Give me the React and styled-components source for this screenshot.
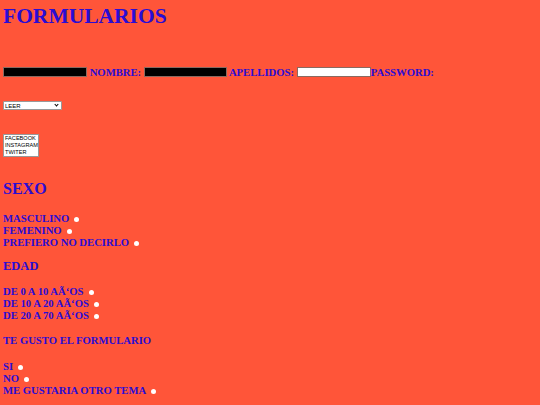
import styled, { createGlobalStyle } from "styled-components";

const Global = createGlobalStyle`
  html, body {
    margin: 0;
    padding: 0;
    background: #ff5539;
  }
  body {
    font-family: "Liberation Serif", "Times New Roman", serif;
    color: #2a0cd4;
    font-weight: bold;
    font-size: 10.67px;
  }
`;

const Page = styled.div`
  padding: 0 3px;
  height: 405px;
  overflow: hidden;
`;

const Title = styled.h1`
  margin: 3px 0 0;
  font-size: 21.5px;
  line-height: 26px;
`;

const Row = styled.div`
  margin-top: 37px;
  line-height: 12px;
  display: flex;
  align-items: center;
  white-space: pre;
`;

const TextBox = styled.input`
  box-sizing: border-box;
  width: ${(p) => p.$w}px;
  height: 10px;
  padding: 0;
  margin: 0;
  border: 1px solid #8a6a60;
  background: ${(p) => (p.$dark ? "#000" : "#fff")};
`;

const SelectWrap = styled.div`
  position: relative;
  width: 59px;
  margin-top: 23px;
  &::after {
    content: "";
    position: absolute;
    right: 4px;
    top: 2px;
    width: 2px;
    height: 2px;
    border-right: 1px solid #000;
    border-bottom: 1px solid #000;
    transform: rotate(45deg);
  }
`;

const Select = styled.select`
  display: block;
  margin: 0;
  width: 59px;
  height: 9px;
  padding: 0 1px;
  font: 6px "Liberation Sans", Arial, sans-serif;
  border: 1px solid #999;
  border-radius: 1px;
  background: #fff;
  color: #000;
  appearance: none;
`;

const ListBox = styled.div`
  margin-top: 24px;
  width: 36px;
  box-sizing: border-box;
  border: 1px solid #999;
  background: #fff;
  padding: 0 1px;
  font: 5.6px/7px "Liberation Sans", Arial, sans-serif;
  color: #000;
  font-weight: normal;
  white-space: nowrap;
  overflow: hidden;
`;

const Heading = styled.h2`
  margin: ${(p) => p.$top}px 0 0;
  font-size: ${(p) => p.$size}px;
  line-height: ${(p) => Math.round(p.$size * 1.15)}px;
`;

const Options = styled.div`
  margin-top: ${(p) => p.$top}px;
  display: flex;
  flex-direction: column;
  line-height: 12px;
`;

const Option = styled.label`
  display: flex;
  align-items: center;
  gap: 5px;
`;

const Dot = styled.input`
  appearance: none;
  margin: 2px 0 0;
  width: 5px;
  height: 5px;
  border-radius: 50%;
  background: #fff;
`;

function Choices({ name, items, top }) {
  return (
    <Options $top={top}>
      {items.map((t) => (
        <Option key={t}>
          {t}
          <Dot type="radio" name={name} />
        </Option>
      ))}
    </Options>
  );
}

export default function App() {
  return (
    <Page>
      <Global />
      <Title>FORMULARIOS</Title>
      <Row>
        <TextBox $dark $w={84} />
        {" NOMBRE: "}
        <TextBox $dark $w={83} />
        {" APELLIDOS: "}
        <TextBox $w={74} />
        {"PASSWORD:"}
      </Row>
      <SelectWrap>
        <Select>
          <option>LEER</option>
        </Select>
      </SelectWrap>
      <ListBox>
        <div>FACEBOOK</div>
        <div>INSTAGRAM</div>
        <div>TWITER</div>
      </ListBox>
      <Heading $top={23} $size={16}>SEXO</Heading>
      <Choices
        top={14}
        name="sexo"
        items={["MASCULINO", "FEMENINO", "PREFIERO NO DECIRLO"]}
      />
      <Heading $top={11} $size={12.5}>EDAD</Heading>
      <Choices
        top={12}
        name="edad"
        items={["DE 0 A 10 AÃ‘OS", "DE 10 A 20 AÃ‘OS", "DE 20 A 70 AÃ‘OS"]}
      />
      <Heading $top={13} $size={10.67}>TE GUSTO EL FORMULARIO</Heading>
      <Choices
        top={14}
        name="gusto"
        items={["SI", "NO", "ME GUSTARIA OTRO TEMA"]}
      />
    </Page>
  );
}
